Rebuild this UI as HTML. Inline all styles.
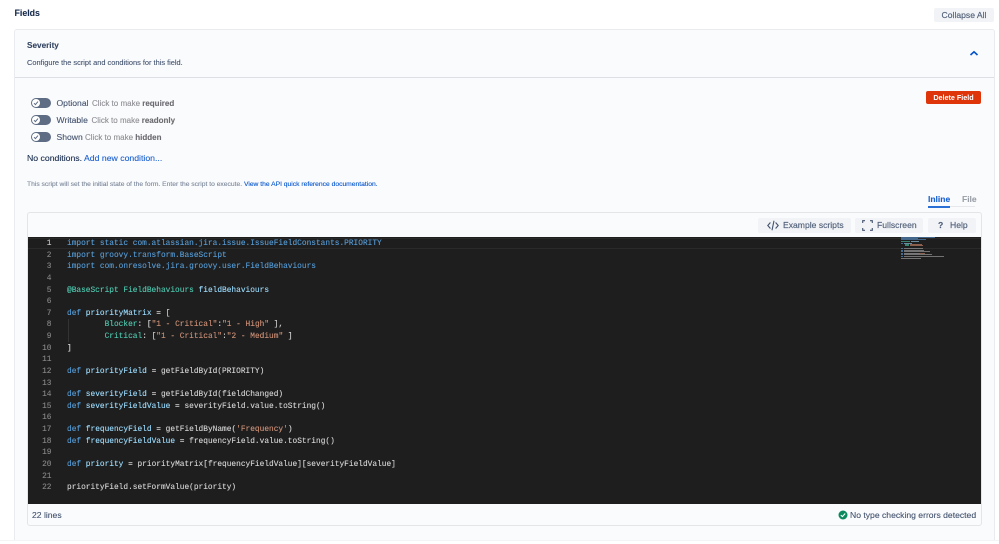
<!DOCTYPE html>
<html><head><meta charset="utf-8"><style>
html,body{margin:0;padding:0;background:#fff}
body{width:999px;height:544px;overflow:hidden;position:relative;font-family:"Liberation Sans",sans-serif;color:#42526e}
.a{position:absolute;white-space:nowrap}
.t{position:absolute;white-space:nowrap;line-height:12px;-webkit-text-stroke:0.1px currentColor}
a{color:#0052cc;text-decoration:none}
.btn{position:absolute;background:#f1f3f6;border-radius:2px;color:#505f79;font-size:8.6px;line-height:15px;white-space:nowrap;-webkit-text-stroke:0.15px currentColor}
.tg{position:absolute;left:31px;width:19.5px;height:10px;border-radius:5px;background:#5e6c84}
.tg i{position:absolute;left:1px;top:1px;width:8px;height:8px;border-radius:50%;background:#fff}
.tg svg{position:absolute;left:2px;top:2px}
.lbl{font-size:8.6px;color:#42526e}
.hint{font-size:8px;color:#8d8d92}
.hint b{color:#6b6b70}
#code{position:absolute;left:28px;top:237px;width:953px;height:267px;background:#1e1e1e;font-family:"Liberation Mono",monospace;font-size:7.83px;line-height:11.62px;overflow:hidden;-webkit-text-stroke:0.12px currentColor}
#nums{position:absolute;left:0;top:1px;width:23.5px;text-align:right;color:#858585;white-space:pre}
#src{position:absolute;left:39px;top:1px;color:#d4d4d4;white-space:pre}
.k{color:#569cd6}.v{color:#9cdcfe}.g{color:#4ec9b0}.s{color:#ce9178}.f{color:#dcdcaa}
</style></head><body>
<div class="t" style="left:14.5px;top:7px;font-size:8.8px;font-weight:bold;color:#172b4d">Fields</div>
<div class="btn" style="left:934px;top:8px;width:60px;height:14px;line-height:14.5px;text-align:center">Collapse All</div>

<div class="a" style="left:14px;top:29px;width:979px;height:511px;background:#fafbfc;border:1px solid #e9ebef;border-bottom:0;border-radius:3px 3px 0 0"></div>
<div class="a" style="left:0;top:540px;width:999px;height:1px;background:#f3f4f6"></div>
<div class="a" style="left:15px;top:77px;width:979px;height:1px;background:#dcdfe4"></div>

<div class="t" style="left:27px;top:40px;font-size:8.2px;font-weight:bold;color:#344563">Severity</div>
<div class="t" style="left:27px;top:57px;font-size:7.4px;color:#42526e">Configure the script and conditions for this field.</div>
<svg class="a" style="left:969px;top:50px" width="10" height="7" viewBox="0 0 10 7"><path d="M1.5 5 L5 1.8 L8.5 5" fill="none" stroke="#0052cc" stroke-width="1.6"/></svg>

<div class="btn" style="left:926px;top:91px;width:55px;height:13px;background:#de350b;color:#fff;font-weight:bold;font-size:7.2px;line-height:13px;text-align:center;-webkit-text-stroke:0">Delete Field</div>

<div class="tg" style="top:97.5px"><i></i><svg width="6" height="6" viewBox="0 0 6 6"><path d="M1 3.2 L2.4 4.6 L5 1.6" fill="none" stroke="#5e6c84" stroke-width="1"/></svg></div>
<div class="tg" style="top:114.5px"><i></i><svg width="6" height="6" viewBox="0 0 6 6"><path d="M1 3.2 L2.4 4.6 L5 1.6" fill="none" stroke="#5e6c84" stroke-width="1"/></svg></div>
<div class="tg" style="top:131.5px"><i></i><svg width="6" height="6" viewBox="0 0 6 6"><path d="M1 3.2 L2.4 4.6 L5 1.6" fill="none" stroke="#5e6c84" stroke-width="1"/></svg></div>

<div class="t lbl" style="left:56.5px;top:97px">Optional</div>
<div class="t hint" style="left:92px;top:98px">Click to make <b>required</b></div>
<div class="t lbl" style="left:56.5px;top:114px">Writable</div>
<div class="t hint" style="left:91.5px;top:115px">Click to make <b>readonly</b></div>
<div class="t lbl" style="left:56.5px;top:131px">Shown</div>
<div class="t hint" style="left:85px;top:132px">Click to make <b>hidden</b></div>

<div class="t" style="left:27px;top:152px;font-size:8.7px;color:#172b4d">No conditions. <a href="#" style="color:#1a5fd0">Add new condition...</a></div>
<div class="t" style="left:27px;top:178.5px;font-size:6.73px;color:#7a869a">This script will set the initial state of the form. Enter the script to execute. <a href="#">View the API quick reference documentation.</a></div>

<div class="t" style="left:928px;top:193px;font-size:8.5px;font-weight:bold;color:#1a5fd0">Inline</div>
<div class="t" style="left:962px;top:193px;font-size:8.5px;font-weight:bold;color:#9a9fa8">File</div>
<div class="a" style="left:928px;top:206px;width:47px;height:1px;background:#e6e8ec"></div>
<div class="a" style="left:928px;top:206px;width:22px;height:2px;background:#2a6fd6"></div>

<div class="a" style="left:27px;top:212px;width:953px;height:311.5px;background:#fafbfc;border:1px solid #e3e5e9;border-radius:3px"></div>

<div class="btn" style="left:758px;top:218px;width:93px;height:15px"><span class="a" style="left:25px;top:0">Example scripts</span>
<svg class="a" style="left:9px;top:2px" width="12" height="11" viewBox="0 0 12 11"><path d="M3.4 2.5 L0.8 5.5 L3.4 8.5 M8.6 2.5 L11.2 5.5 L8.6 8.5 M7 0.8 L5 10.2" fill="none" stroke="#42526e" stroke-width="1.1"/></svg></div>
<div class="btn" style="left:855px;top:218px;width:68px;height:15px"><span class="a" style="left:22px;top:0">Fullscreen</span>
<svg class="a" style="left:7px;top:2px" width="11" height="11" viewBox="0 0 11 11"><path d="M0.7 3 V0.7 H3 M8 0.7 H10.3 V3 M10.3 8 V10.3 H8 M3 10.3 H0.7 V8" fill="none" stroke="#42526e" stroke-width="1.1"/></svg></div>
<div class="btn" style="left:928px;top:218px;width:48px;height:15px"><span class="a" style="left:10px;top:0;font-weight:bold">?</span><span class="a" style="left:22px;top:0">Help</span></div>

<div id="code">
<div class="a" style="left:0;top:0.5px;width:953px;height:11px;border-top:0.5px solid #2a2a2a;border-bottom:1px solid #2a2a2a;box-sizing:border-box"></div>
<div class="a" style="left:39.5px;top:82px;width:1px;height:23px;background:#333"></div>
<div id="nums"><span style="color:#c6c6c6">1</span>
2
3
4
5
6
7
8
9
10
11
12
13
14
15
16
17
18
19
20
21
22</div>
<div id="src"><span class="k">import static com.atlassian.jira.issue.IssueFieldConstants.PRIORITY</span>
<span class="k">import groovy.transform.BaseScript</span>
<span class="k">import com.onresolve.jira.groovy.user.FieldBehaviours</span>

<span class="g">@BaseScript FieldBehaviours</span> <span class="v">fieldBehaviours</span>

<span class="k">def</span> <span class="v">priorityMatrix</span> = [
        <span class="g">Blocker</span>: [<span class="s">"1 - Critical"</span>:<span class="s">"1 - High"</span> ],
        <span class="g">Critical</span>: [<span class="s">"1 - Critical"</span>:<span class="s">"2 - Medium"</span> ]
]

<span class="k">def</span> <span class="v">priorityField</span> = getFieldById(PRIORITY)

<span class="k">def</span> <span class="v">severityField</span> = getFieldById(fieldChanged)
<span class="k">def</span> <span class="v">severityFieldValue</span> = severityField.value.toString()

<span class="k">def</span> <span class="v">frequencyField</span> = getFieldByName(<span class="s">'Frequency'</span>)
<span class="k">def</span> <span class="v">frequencyFieldValue</span> = frequencyField.value.toString()

<span class="k">def</span> <span class="v">priority</span> = priorityMatrix[frequencyFieldValue][severityFieldValue]

priorityField.setFormValue(priority)</div>
<svg class="a" style="left:873px;top:0;-webkit-text-stroke:0" width="50" height="28" viewBox="0 0 50 28">
<g stroke-width="0.8" fill="none">
<path d="M0 .5H34" stroke="#4f7fae"/><path d="M0 1.5H17" stroke="#4f7fae"/><path d="M0 2.5H25" stroke="#4f7fae"/>
<path d="M0 4.5H9" stroke="#3f9c88"/><path d="M10 4.5H18" stroke="#7fa5c0"/>
<path d="M0 6.5H2" stroke="#4f7fae"/><path d="M3 6.5H11" stroke="#7fa5c0"/>
<path d="M4 7.5H8" stroke="#3f9c88"/><path d="M9 7.5H21" stroke="#a5705a"/>
<path d="M4 8.5H8" stroke="#3f9c88"/><path d="M9 8.5H22" stroke="#a5705a"/>
<path d="M0 11.5H2" stroke="#4f7fae"/><path d="M3 11.5H22" stroke="#8f8f8f"/>
<path d="M0 13.5H2" stroke="#4f7fae"/><path d="M3 13.5H23" stroke="#8f8f8f"/>
<path d="M0 14.5H2" stroke="#4f7fae"/><path d="M3 14.5H29" stroke="#8f8f8f"/>
<path d="M0 16.5H2" stroke="#4f7fae"/><path d="M3 16.5H19" stroke="#8f8f8f"/><path d="M19 16.5H24" stroke="#a5705a"/>
<path d="M0 17.5H2" stroke="#4f7fae"/><path d="M3 17.5H31" stroke="#8f8f8f"/>
<path d="M0 19.5H2" stroke="#4f7fae"/><path d="M3 19.5H43" stroke="#8f8f8f"/>
<path d="M0 21.5H20" stroke="#8f8f8f"/>
</g></svg>
</div>

<div class="t" style="left:32px;top:509px;font-size:8.6px;color:#42526e">22 lines</div>
<svg class="a" style="left:838px;top:510px" width="10" height="10" viewBox="0 0 10 10"><circle cx="5" cy="5" r="4.5" fill="#0b8a5f"/><path d="M2.8 5.1 L4.4 6.6 L7.2 3.5" fill="none" stroke="#fff" stroke-width="1.1"/></svg>
<div class="t" style="left:850px;top:509px;font-size:8.6px;color:#42526e">No type checking errors detected</div>
</body></html>
